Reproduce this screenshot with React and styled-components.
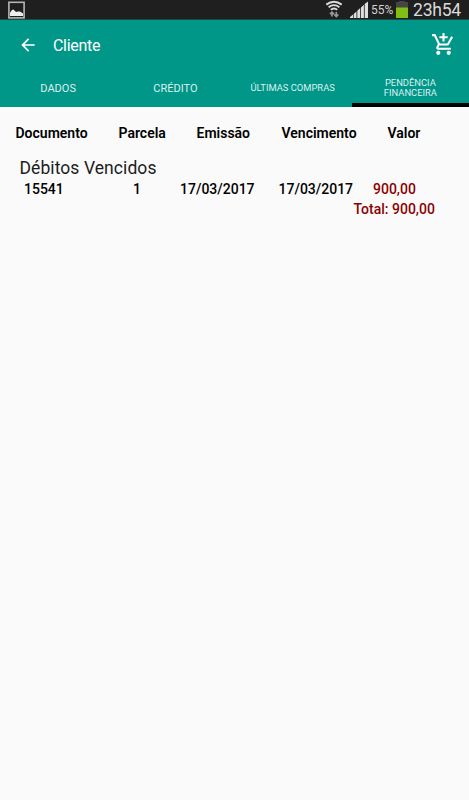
import styled, { createGlobalStyle, css } from 'styled-components';
import { MdArrowBack, MdAddShoppingCart } from 'react-icons/md';

const GlobalStyle = createGlobalStyle`
  body {
    margin: 0;
    background: #fafafa;
    font-family: Roboto, sans-serif;
  }
`;

const Screen = styled.div`
  height: 800px;
  overflow: hidden;
  background: #fafafa;
`;

const StatusBar = styled.div`
  display: flex;
  justify-content: space-between;
  height: 19px;
  padding: 0 8px;
  background: #1f1f1f;
  border-bottom: 1px solid #14504a;

  svg {
    display: block;
    flex: none;
  }
`;

const StatusGroup = styled.div`
  display: flex;
  align-items: flex-start;
`;

const Battery = styled.span`
  width: 25px;
  margin-left: 3px;
  color: #d2d2d2;
  font-size: 12px;
  line-height: 20px;
  white-space: nowrap;
`;

const Clock = styled.span`
  width: 48px;
  margin-left: 5px;
  color: #dadada;
  font-size: 17.6px;
  line-height: 20px;
  letter-spacing: -0.25px;
  white-space: nowrap;
`;

const Toolbar = styled.header`
  display: flex;
  align-items: center;
  height: 50px;
  padding: 0 13px 0 18px;
  background: #009688;
  color: #fff;
`;

const Title = styled.h1`
  flex: 1;
  margin: 1px 0 0 15px;
  font-size: 16px;
  font-weight: 400;
  line-height: 20px;
  letter-spacing: -0.3px;
`;

const CartIcon = styled(MdAddShoppingCart)`
  margin-bottom: 1px;
`;

const Tabs = styled.nav`
  display: grid;
  grid-template-columns: repeat(4, 1fr);
  height: 37px;
  background: #009688;
`;

const Tab = styled.a`
  display: flex;
  align-items: center;
  justify-content: center;
  box-sizing: border-box;
  padding: ${props => (props.$small ? '2px' : '4px')} 1px 0 0;
  color: #dcf1ef;
  font-size: ${props => (props.$small ? '9.4px' : '11px')};
  line-height: 10px;
  text-align: center;
  text-transform: uppercase;
  border-bottom: 4px solid transparent;

  ${props => props.$active && css`
    padding-right: 0;
    border-color: #000;
  `}
`;

const Row = styled.div`
  display: grid;
  grid-template-columns: ${props => props.$columns};
  padding-left: ${props => props.$left}px;
  color: #000;
  font-size: 14px;
  font-weight: 600;
  line-height: 20px;
  white-space: nowrap;
`;

const HeadRow = styled(Row)`
  margin-top: 16px;
`;

const SectionTitle = styled.h2`
  margin: 14px 0 0 19.5px;
  color: #1c1c1c;
  font-size: 17.5px;
  font-weight: 400;
  line-height: 22px;
  letter-spacing: 0.08px;
`;

const DataRow = styled(Row)`
  font-weight: 500;
`;

const Amount = styled.span`
  color: #8b0000;
`;

const Total = styled.div`
  padding-left: 353.5px;
  color: #8b0000;
  font-size: 14px;
  font-weight: 500;
  line-height: 20px;
`;

const SignalGap = styled.span`
  width: 7px;
`;

function PictureIcon() {
  return (
    <svg width="17" height="19" viewBox="0 0 17 19">
      <rect x="0.9" y="2.3" width="15.2" height="15.6" fill="#1f1f1f" stroke="#b5b5b5" strokeWidth="1.6" />
      <path d="M2 16v-3.2l2-2.8 1.5-.5L8 12l2-.6 2 .2 3 2V16z" fill="#eee" />
    </svg>
  );
}

function WifiIcon() {
  return (
    <svg width="18" height="19" viewBox="0 0 18 19" fill="none" stroke="#dcdcdc">
      <path d="M1.3 4.6Q9 -1 16.7 4.6" strokeWidth="2" />
      <path d="M3.6 7.2Q9 3 14.4 7.2" strokeWidth="1.8" />
      <path d="M5.8 9.8Q9 7 12.2 9.8" strokeWidth="1.9" />
      <path d="M7 16.5v-4M5 14.2l2-2 2 2M11.3 12v4.5M9.3 14.5l2 2 2-2" stroke="#989898" strokeWidth="1.7" />
    </svg>
  );
}

function SignalIcon() {
  return (
    <svg width="18" height="19" viewBox="0 0 18 19" fill="#dedede">
      <path d="M0 18v-1l3-2.4V18zM3.7 18v-4l2.8-2.4V18zM7.3 18v-7.3l2.9-2.6V18zM11 18V7.4l2.9-2.6V18zM14.7 18V4L18 1.6V18z" />
    </svg>
  );
}

function BatteryIcon() {
  return (
    <svg width="12" height="19" viewBox="0 0 12 19">
      <path d="M3 1h6v1h3v6H0V2h3z" fill="#454545" />
      <rect y="7.5" width="12" height="10.5" fill="#82bd16" />
    </svg>
  );
}

const TABS = [
  { label: 'Dados' },
  { label: 'Crédito' },
  { label: 'Últimas compras', small: true },
  { label: <>Pendência<br />financeira</>, small: true, active: true },
];

export default function App() {
  return (
    <Screen>
      <GlobalStyle />
      <StatusBar>
        <PictureIcon />
        <StatusGroup>
          <WifiIcon />
          <SignalGap />
          <SignalIcon />
          <Battery>55%</Battery>
          <BatteryIcon />
          <Clock>23h54</Clock>
        </StatusGroup>
      </StatusBar>
      <Toolbar>
        <MdArrowBack size={20} />
        <Title>Cliente</Title>
        <CartIcon size={25} />
      </Toolbar>
      <Tabs>
        {TABS.map((tab, i) => (
          <Tab key={i} $small={tab.small} $active={tab.active}>
            <span>{tab.label}</span>
          </Tab>
        ))}
      </Tabs>
      <HeadRow $columns="103px 78px 85px 106px auto" $left={15.5}>
        <span>Documento</span>
        <span>Parcela</span>
        <span>Emissão</span>
        <span>Vencimento</span>
        <span>Valor</span>
      </HeadRow>
      <SectionTitle>Débitos Vencidos</SectionTitle>
      <DataRow $columns="109px 47px 98.5px 94.5px auto" $left={24}>
        <span>15541</span>
        <span>1</span>
        <span>17/03/2017</span>
        <span>17/03/2017</span>
        <Amount>900,00</Amount>
      </DataRow>
      <Total>Total: 900,00</Total>
    </Screen>
  );
}
